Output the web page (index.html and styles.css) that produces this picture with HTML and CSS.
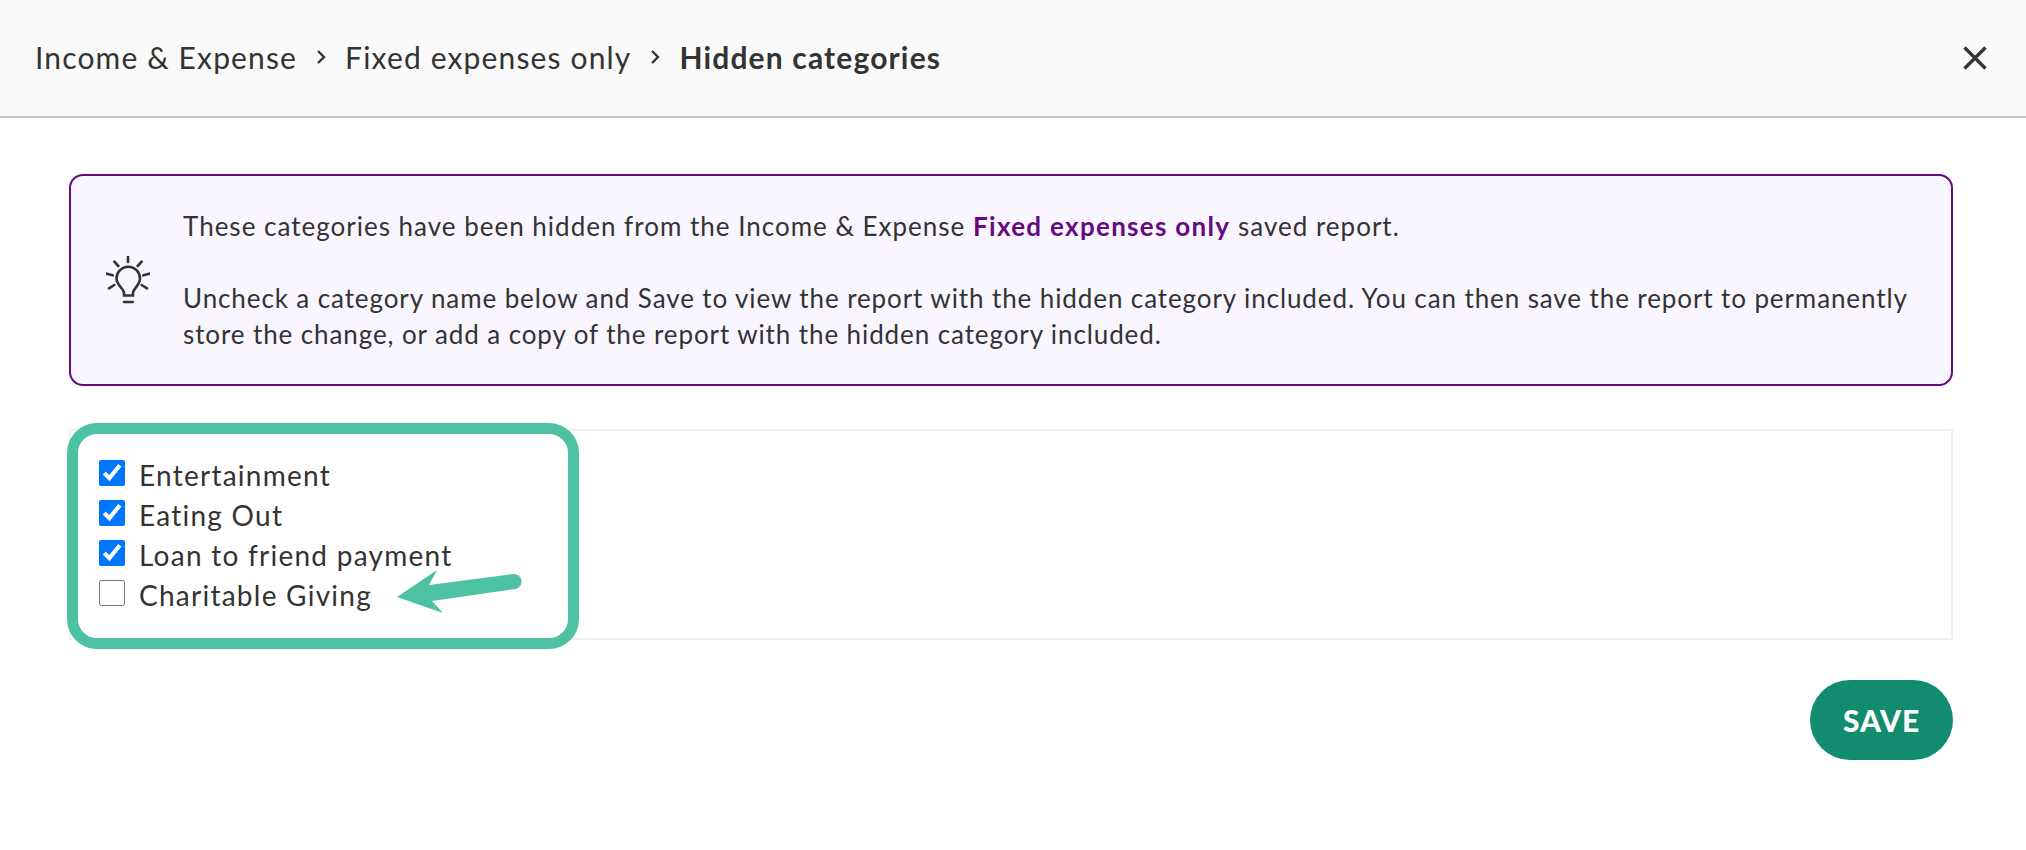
FILE: index.html
```html
<!DOCTYPE html>
<html lang="en">
<head>
    <meta charset="UTF-8">
    <title>Hidden categories</title>
    <link rel="stylesheet" href="styles.css">
</head>
<body>
    <header class="topbar">
        <nav class="crumbs">
            <span>Income &amp; Expense</span>
            <svg class="chevron" viewBox="0 0 10 14"><path d="M2 1 L8 7 L2 13"/></svg>
            <span>Fixed expenses only</span>
            <svg class="chevron" viewBox="0 0 10 14"><path d="M2 1 L8 7 L2 13"/></svg>
            <strong>Hidden categories</strong>
        </nav>
        <svg class="close" viewBox="0 0 24 24"><path d="M1.5 1.5 L22.5 22.5 M22.5 1.5 L1.5 22.5"/></svg>
    </header>

    <main class="content">
        <section class="notice">
            <svg class="bulb" viewBox="0 0 44 48">
                <path d="M22 0 V6 M8.3 5.7 L12.3 10 M35.7 5.7 L31.7 10 M0.7 17.7 L6.7 19.3 M43.3 17.7 L37.3 19.3 M3 32.3 L8.3 29 M41 32.3 L35.7 29"/>
                <path d="M18 39.5 V37 C18 33 10.5 29 10.5 22.5 A11.7 11.7 0 0 1 34 22.5 C34 29 27 33 27 37 V39.5 Z"/>
                <path d="M18 46 H26.7"/>
            </svg>
            <div class="notice-text">
                <p class="lead">These categories have been hidden from the Income &amp; Expense <b>Fixed expenses only</b> saved report.</p>
                <p>Uncheck a category name below and Save to view the report with the hidden category included. You can then save the report to permanently store the change, or add a copy of the report with the hidden category included.</p>
            </div>
        </section>

        <div class="list-wrap">
            <div class="list">
                <label class="row"><input type="checkbox" checked><span>Entertainment</span></label>
                <label class="row"><input type="checkbox" checked><span>Eating Out</span></label>
                <label class="row"><input type="checkbox" checked><span>Loan to friend payment</span></label>
                <label class="row"><input type="checkbox"><span>Charitable Giving</span></label>
            </div>
            <div class="highlight"></div>
            <svg class="arrow" viewBox="0 0 130 50">
                <path d="M2 32 L42 5 L34 20 L118 9 A7.5 7.5 0 0 1 120 24 L37 36 L48 48 Z"/>
            </svg>
        </div>

        <div class="actions">
            <button class="save">SAVE</button>
        </div>
    </main>
</body>
</html>
```

FILE: styles.css
```css
* {
    box-sizing: border-box;
}

body {
    margin: 0;
    font-family: Lato, "Open Sans", sans-serif;
    color: #333;
    background-color: #fff;
}

.topbar {
    display: flex;
    justify-content: space-between;
    align-items: center;
    height: 118px;
    padding: 0 39px 0 35px;
    background-color: #fafafa;
    border-bottom: 2px solid #c8c8c8;
}

.crumbs {
    display: flex;
    align-items: center;
    gap: 19px;
    padding-bottom: 2px;
    font-size: 30px;
    letter-spacing: 1.15px;
}

.crumbs strong {
    font-weight: 700;
}

.chevron {
    width: 10px;
    height: 14px;
    fill: none;
    stroke: #333;
    stroke-width: 2.4;
}

.close {
    width: 24px;
    height: 24px;
    fill: none;
    stroke: #333;
    stroke-width: 3.2;
}

.content {
    padding: 56px 73px 0 69px;
}

.notice {
    display: flex;
    align-items: center;
    gap: 33px;
    height: 212px;
    padding: 0 30px 0 35px;
    background-color: #f9f6ff;
    border: 2px solid #660a80;
    border-radius: 14px;
}

.bulb {
    flex: none;
    width: 44px;
    height: 48px;
    fill: none;
    stroke: #333;
    stroke-width: 2.6;
    stroke-linecap: round;
}

.notice-text {
    font-size: 26px;
    line-height: 36px;
    letter-spacing: 0.9px;
}

.notice-text p {
    margin: 0 0 36px;
}

.notice-text p:last-child {
    margin-bottom: 0;
}

.notice-text .lead {
    letter-spacing: 1px;
}

.notice-text b {
    color: #660a80;
    letter-spacing: 1.3px;
}

.list-wrap {
    position: relative;
    margin-top: 43px;
}

.list {
    display: flex;
    flex-direction: column;
    height: 211px;
    padding: 22px 28px;
    border: 2px solid #f0f0f0;
}

.row {
    display: flex;
    flex: none;
    align-items: center;
    gap: 14px;
    height: 40px;
    font-size: 28px;
    letter-spacing: 1.25px;
}

.row input {
    width: 26px;
    height: 26px;
    margin: 0;
}

.row span {
    padding-top: 3px;
}

.highlight {
    position: absolute;
    left: -2px;
    top: -6px;
    width: 512px;
    height: 226px;
    border: 11px solid #4cc2a2;
    border-radius: 30px;
}

.arrow {
    position: absolute;
    left: 326px;
    top: 136px;
    width: 130px;
    height: 50px;
    fill: #4cc2a2;
}

.actions {
    display: flex;
    justify-content: flex-end;
    margin-top: 40px;
}

.save {
    width: 143px;
    height: 80px;
    padding: 0;
    font-family: inherit;
    font-size: 30px;
    font-weight: 900;
    letter-spacing: 0.8px;
    color: #fff;
    background-color: #118c6e;
    border: none;
    border-radius: 40px;
}
```
